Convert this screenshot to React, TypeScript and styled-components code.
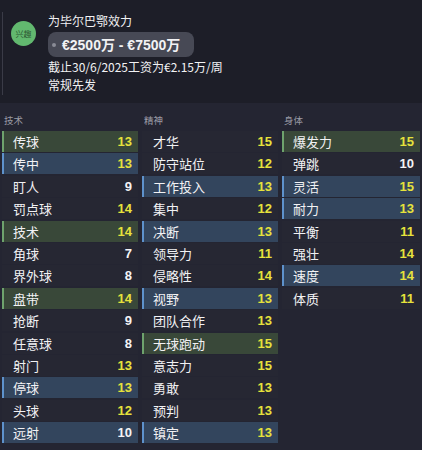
import React from "react";
import styled, { createGlobalStyle } from "styled-components";

type Tone = "none" | "green" | "blue";
type Attr = { name: string; value: number; tone?: Tone };

const technical: Attr[] = [
  { name: "传球", value: 13, tone: "green" },
  { name: "传中", value: 13, tone: "blue" },
  { name: "盯人", value: 9 },
  { name: "罚点球", value: 14 },
  { name: "技术", value: 14, tone: "green" },
  { name: "角球", value: 7 },
  { name: "界外球", value: 8 },
  { name: "盘带", value: 14, tone: "green" },
  { name: "抢断", value: 9 },
  { name: "任意球", value: 8 },
  { name: "射门", value: 13 },
  { name: "停球", value: 13, tone: "blue" },
  { name: "头球", value: 12 },
  { name: "远射", value: 10, tone: "blue" },
];

const mental: Attr[] = [
  { name: "才华", value: 15 },
  { name: "防守站位", value: 12 },
  { name: "工作投入", value: 13, tone: "blue" },
  { name: "集中", value: 12 },
  { name: "决断", value: 13, tone: "blue" },
  { name: "领导力", value: 11 },
  { name: "侵略性", value: 14 },
  { name: "视野", value: 13, tone: "blue" },
  { name: "团队合作", value: 13 },
  { name: "无球跑动", value: 15, tone: "green" },
  { name: "意志力", value: 15 },
  { name: "勇敢", value: 13 },
  { name: "预判", value: 13 },
  { name: "镇定", value: 13, tone: "blue" },
];

const physical: Attr[] = [
  { name: "爆发力", value: 15, tone: "green" },
  { name: "弹跳", value: 10 },
  { name: "灵活", value: 15, tone: "blue" },
  { name: "耐力", value: 13, tone: "blue" },
  { name: "平衡", value: 11 },
  { name: "强壮", value: 14 },
  { name: "速度", value: 14, tone: "blue" },
  { name: "体质", value: 11 },
];

const GlobalStyle = createGlobalStyle`
  html, body {
    margin: 0;
    padding: 0;
    background: #242532;
  }
  body {
    font-family: "Noto Sans CJK SC", "Noto Sans", sans-serif;
    color: #f2f2f4;
  }
`;

const Page = styled.div`
  width: 422px;
  height: 450px;
  overflow: hidden;
  background: #242532;
`;

const Header = styled.div`
  background: #1d1e28;
  height: 103px;
  box-sizing: border-box;
  padding: 12px 0 0 2px;
`;

const HeaderInner = styled.div`
  display: flex;
  gap: 12px;
  border-left: 1px solid #3a3b47;
  height: 83px;
  padding-left: 8px;
`;

const Badge = styled.div`
  width: 25px;
  height: 25px;
  border-radius: 50%;
  background: #62b86f;
  color: #2d5a33;
  font-size: 8px;
  display: flex;
  align-items: center;
  justify-content: center;
  margin-top: 9px;
  flex-shrink: 0;
`;

const Info = styled.div`
  display: flex;
  flex-direction: column;
  align-items: flex-start;
  font-size: 12px;
  line-height: 18px;
`;

const Pill = styled.div`
  position: relative;
  margin: 2px 0 1px 0;
  background: #474955;
  border-radius: 8px;
  padding: 4px 14px 3px 14px;
  font-family: "Liberation Sans", "Noto Sans CJK SC", sans-serif;
  font-weight: bold;
  font-size: 14px;
  line-height: 18px;
  &::before {
    content: "";
    position: absolute;
    left: 4px;
    top: 11px;
    width: 4px;
    height: 4px;
    border-radius: 50%;
    background: #8a8c96;
  }
`;

const Columns = styled.div`
  display: grid;
  grid-template-columns: 136px 136px 138px;
  column-gap: 4px;
  padding: 10px 2px 0 2px;
`;

const Column = styled.div`
  display: flex;
  flex-direction: column;
`;

const ColTitle = styled.div`
  font-size: 9.5px;
  color: #9a9ba5;
  height: 18px;
  line-height: 14px;
  padding-left: 2px;
`;

const toneBg: Record<Tone, string> = {
  none: "#262733",
  green: "#394839",
  blue: "#33455d",
};
const toneBorder: Record<Tone, string> = {
  none: "#262733",
  green: "#6ea36d",
  blue: "#5e92cc",
};

const Row = styled.div<{ $tone: Tone }>`
  display: flex;
  align-items: center;
  justify-content: space-between;
  height: 21px;
  margin-bottom: 1.4px;
  box-sizing: border-box;
  background: ${(p) => toneBg[p.$tone]};
  border-left: 2px solid ${(p) => toneBorder[p.$tone]};
  padding: 0 6px 0 9px;
  font-size: 13px;
`;

const Value = styled.span<{ $high: boolean }>`
  font-family: "Liberation Sans", sans-serif;
  font-weight: bold;
  font-size: 13px;
  color: ${(p) => (p.$high ? "#e6e23c" : "#f4f4f6")};
`;

function AttrColumn({ title, items }: { title: string; items: Attr[] }) {
  return (
    <Column>
      <ColTitle>{title}</ColTitle>
      {items.map((a) => (
        <Row key={a.name} $tone={a.tone || "none"}>
          <span>{a.name}</span>
          <Value $high={a.value > 10}>{a.value}</Value>
        </Row>
      ))}
    </Column>
  );
}

export default function App() {
  return (
    <Page>
      <GlobalStyle />
      <Header>
        <HeaderInner>
          <Badge>兴趣</Badge>
          <Info>
            <span>为毕尔巴鄂效力</span>
            <Pill>€2500万 - €7500万</Pill>
            <span>截止30/6/2025工资为€2.15万/周</span>
            <span>常规先发</span>
          </Info>
        </HeaderInner>
      </Header>
      <Columns>
        <AttrColumn title="技术" items={technical} />
        <AttrColumn title="精神" items={mental} />
        <AttrColumn title="身体" items={physical} />
      </Columns>
    </Page>
  );
}
